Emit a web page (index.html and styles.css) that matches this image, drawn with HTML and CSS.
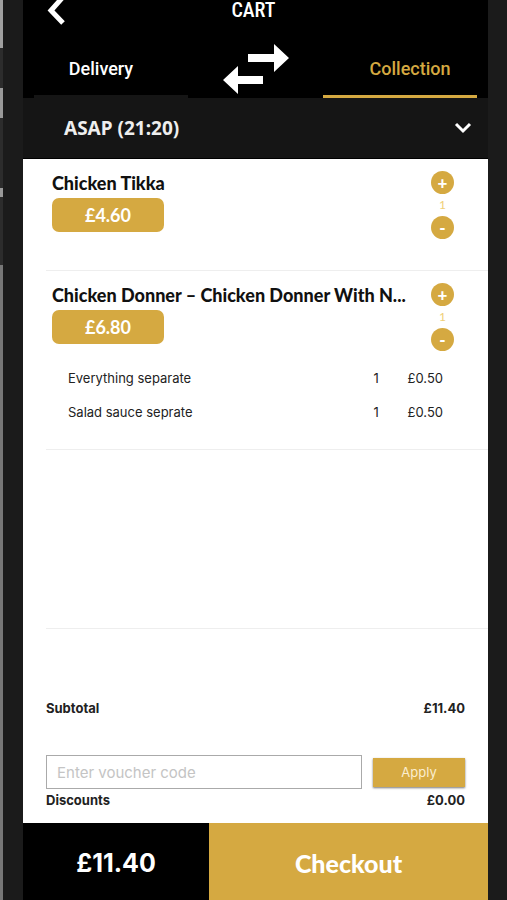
FILE: index.html
```html
<!DOCTYPE html>
<html lang="en">
<head>
<meta charset="utf-8">
<meta name="viewport" content="width=device-width, initial-scale=1">
<title>Cart</title>
<link rel="stylesheet" href="styles.css">
</head>
<body>
<div class="rail" aria-hidden="true"></div>
<div class="screen">
  <header class="top">
    <div class="title-bar">
      <button class="back" aria-label="Back"><svg width="20" height="32" viewBox="0 0 20 32"><path d="M16 2 4 15.500 16 28" fill="none" stroke="#fff" stroke-width="5"/></svg></button>
      <h1>CART</h1>
    </div>
    <nav class="modes">
      <button class="mode">Delivery</button>
      <svg class="swap" width="66" height="52" viewBox="0 0 66 52" fill="#fff"><path d="M25 11h26V1l15 14-15 14V19H25zM40 33H15V23L0 37l15 14V41h25z"/></svg>
      <button class="mode active">Collection</button>
    </nav>
  </header>
  <button class="time"><span>ASAP (21:20)</span><svg width="18" height="12" viewBox="0 0 18 12"><path d="M2 2l7 7 7-7" fill="none" stroke="#fff" stroke-width="3"/></svg></button>
  <main>
    <section class="item">
      <div class="item-head">
        <div class="item-info"><h2>Chicken Tikka</h2><span class="price">£4.60</span></div>
        <div class="stepper"><button aria-label="Add one">+</button><span>1</span><button aria-label="Remove one">-</button></div>
      </div>
    </section>
    <section class="item">
      <div class="item-head">
        <div class="item-info"><h2>Chicken Donner – Chicken Donner With N...</h2><span class="price">£6.80</span></div>
        <div class="stepper"><button aria-label="Add one">+</button><span>1</span><button aria-label="Remove one">-</button></div>
      </div>
      <ul class="extras">
        <li><span class="name">Everything separate</span><span class="qty">1</span><span>£0.50</span></li>
        <li><span class="name">Salad sauce seprate</span><span class="qty">1</span><span>£0.50</span></li>
      </ul>
    </section>
    <div class="space"></div>
    <section class="totals">
      <div class="line"><span>Subtotal</span><span>£11.40</span></div>
      <form class="voucher">
        <input type="text" aria-label="Voucher code" placeholder="Enter voucher code">
        <button type="button">Apply</button>
      </form>
      <div class="line"><span>Discounts</span><span>£0.00</span></div>
    </section>
  </main>
  <footer class="pay"><strong>£11.40</strong><button>Checkout</button></footer>
</div>
</body>
</html>
```

FILE: styles.css
```css
* { box-sizing: border-box; }

body {
  margin: 0;
  min-height: 100vh;
  display: flex;
  background: #1b1b1b;
  font-family: Inter, "Liberation Sans", sans-serif;
  color: #222;
}

button {
  font: inherit;
  color: inherit;
  border: 0;
  padding: 0;
  background: none;
}

h1, h2, ul { margin: 0; padding: 0; }

.rail {
  width: 3px;
  margin-right: 20px;
  background: linear-gradient(#a0a0a0 48px, #2c2c2c 48px 88px, #999 88px 118px, #2c2c2c 118px 188px, #999 188px 197px, #2c2c2c 197px 265px, #777 265px);
}

.screen {
  flex: 1;
  min-width: 0;
  margin-right: 19px;
  display: flex;
  flex-direction: column;
  background: #fff;
}

.top { background: #000; color: #fff; }

.title-bar {
  height: 40px;
  display: grid;
  grid-template-columns: 68px 1fr 72px;
  align-items: start;
}

.back { height: 32px; padding-left: 24px; text-align: left; overflow: hidden; }
.back svg { display: block; margin-top: -10px; }

h1 {
  font: 500 20px/20px "Roboto Condensed", "Open Sans Condensed", "DejaVu Sans Condensed", sans-serif;
  text-align: center;
}

.modes {
  display: flex;
  justify-content: space-between;
  align-items: center;
  height: 58px;
  padding: 0 11px;
}

.mode {
  width: 154px;
  height: 58px;
  border-bottom: 3px solid #151515;
  font: 500 18px/24px Roboto, sans-serif;
  padding: 3px 20px 0 0;
}

.mode.active {
  color: #d5a941;
  border-color: #d5a941;
  padding: 3px 0 0 20px;
}

.time {
  height: 61px;
  display: flex;
  justify-content: space-between;
  align-items: center;
  padding: 0 16px 0 41px;
  background: #151515;
  border-bottom: 1px solid #000;
  color: #eee;
  font: 700 19px/24px "Noto Sans", sans-serif;
}

main { flex: 1; display: flex; flex-direction: column; }

.item {
  margin-left: 23px;
  border-bottom: 1px solid #eee;
}

.item-head {
  display: flex;
  justify-content: space-between;
  padding: 12px 34px 0 6px;
  height: 111px;
}

.item-info { flex: 1; min-width: 0; }

h2 {
  color: #111;
  font: 900 18px/24px Lato, sans-serif;
  white-space: nowrap;
  overflow: hidden;
  text-overflow: ellipsis;
}

.price {
  display: block;
  width: 112px;
  margin-top: 3px;
  border-radius: 7px;
  background: #d5a941;
  color: #fff;
  font: 700 18px/34px Lato, sans-serif;
  text-align: center;
}

.stepper {
  display: flex;
  flex-direction: column;
  align-items: center;
  width: 23px;
  color: #f0cf78;
  font: 400 12px/22px Lato, sans-serif;
}

.stepper button {
  width: 23px;
  height: 23px;
  border-radius: 50%;
  background: #d5a941;
  color: #fff;
  font: 900 17px/22px Lato, sans-serif;
}

.extras {
  list-style: none;
  padding: 0 45px 20px 22px;
  margin-top: -21px;
  font-size: 13px;
  line-height: 34px;
}

.extras li { display: flex; }
.extras .name { flex: 1; }
.extras .qty { width: 34px; }

.space {
  flex: 1;
  margin-left: 23px;
  border-bottom: 1px solid #eee;
}

.totals {
  height: 194px;
  padding: 68px 23px 0;
}

.line {
  display: flex;
  justify-content: space-between;
  font-size: 13px;
  font-weight: 700;
  line-height: 22px;
}

.voucher {
  display: flex;
  align-items: center;
  gap: 11px;
  margin-top: 36px;
}

.voucher input {
  flex: 1;
  min-width: 0;
  height: 34px;
  padding: 0 10px;
  border: 1px solid #aaa;
  border-radius: 0;
  font: 400 15px Inter, sans-serif;
}

.voucher input::placeholder { color: #c4c4c4; }

.voucher button {
  width: 92px;
  height: 29px;
  background: #d5a941;
  box-shadow: 0 1px 2px #777;
  color: #fbeed0;
  font-size: 13px;
}

.pay {
  height: 77px;
  display: grid;
  grid-template-columns: 2fr 3fr;
  background: #000;
  color: #fff;
  line-height: 77px;
  text-align: center;
}

.pay strong { font-size: 25px; font-weight: 700; padding-top: 2px; }

.pay button {
  background: #d5a941;
  font: 900 25px/30px Lato, sans-serif;
}
```
